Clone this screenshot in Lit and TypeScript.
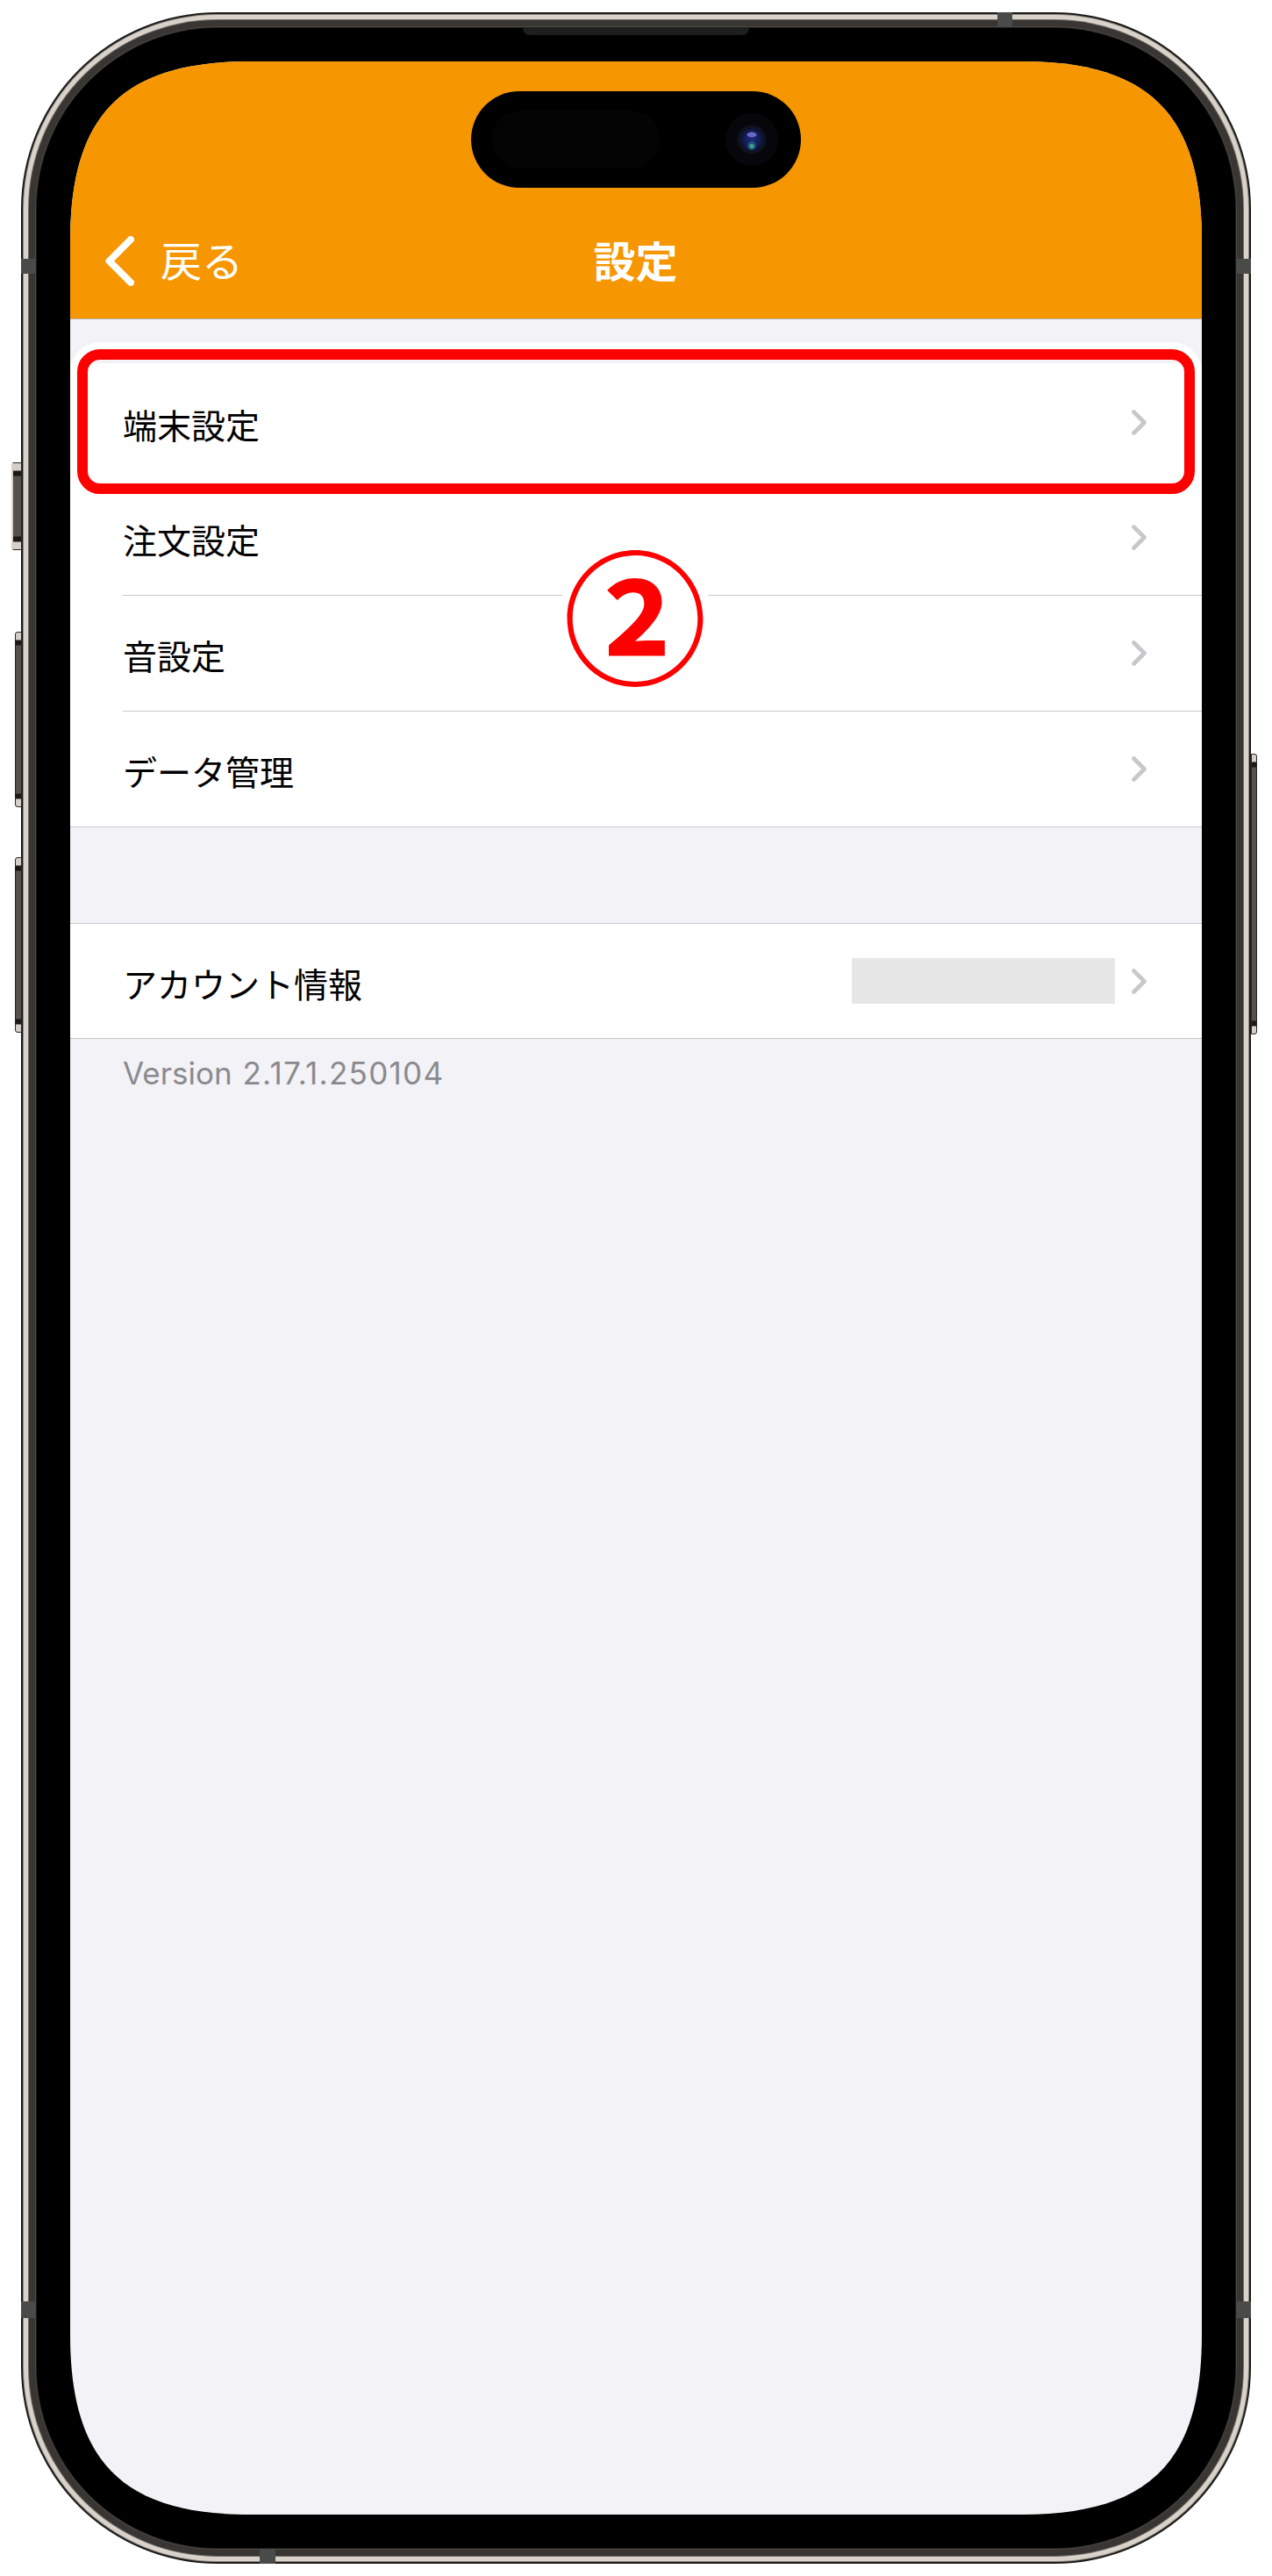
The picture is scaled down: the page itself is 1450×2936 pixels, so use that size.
import { LitElement, html, css } from "lit";
import { customElement } from "lit/decorators.js";

const chevron = html`<svg class="chev" width="17" height="29" viewBox="0 0 17 29" aria-hidden="true">
  <path d="M2.5 2.5 L14.5 14.5 L2.5 26.5" fill="none" stroke="#c7c7cc" stroke-width="4.6" stroke-linecap="round" stroke-linejoin="round"/>
</svg>`;

const camera = html`<svg class="cam" width="60" height="60" viewBox="-30 -30 60 60" aria-hidden="true">
  <defs>
    <radialGradient id="lens" cx="50%" cy="50%" r="50%">
      <stop offset="0%" stop-color="#1c2a78"/>
      <stop offset="70%" stop-color="#141c55"/>
      <stop offset="100%" stop-color="#0e1230"/>
    </radialGradient>
  </defs>
  <circle r="30" fill="#07060b"/>
  <circle r="16.5" fill="#0f1320"/>
  <circle r="13" fill="url(#lens)"/>
  <ellipse cx="0" cy="-5.5" rx="5.5" ry="3" fill="#6a68c4"/>
  <circle cx="0" cy="7" r="5" fill="#1f4f78"/>
  <circle cx="0" cy="7.5" r="2.6" fill="#3fa08a"/>
</svg>`;

@customElement("app-root")
export class AppRoot extends LitElement {
  static styles = css`
    :host {
      display: block;
      width: 1450px;
      height: 2936px;
      background: #fff;
      overflow: hidden;
      font-family: "Noto Sans CJK JP", "Liberation Sans", sans-serif;
    }
    .page {
      padding: 32px 0 0 42px;
    }
    .device {
      position: relative;
      width: 1366px;
      height: 2872px;
      box-sizing: border-box;
      padding: 38px;
      background: #000;
      border-radius: 206px;
      box-shadow:
        0 0 0 1px #1c1b1a,
        0 0 0 2px #4c4a47,
        0 0 0 9px #383533,
        0 0 0 10px #6f6b65,
        0 0 0 15px #d9d2ca,
        0 0 0 16px #8f8a84,
        0 0 0 18px #1b1a19;
    }
    .screen {
      position: relative;
      width: 1290px;
      height: 2796px;
      background: #f2f2f7;
      clip-path: path("M205 0 H1085 C1230 0 1290 60 1290 205 V2591 C1290 2736 1230 2796 1085 2796 H205 C60 2796 0 2736 0 2591 V205 C0 60 60 0 205 0 Z");
    }

    /* hardware details lying over the frame */
    .speaker {
      position: absolute;
      left: 554px;
      top: -1px;
      width: 258px;
      height: 9px;
      background: #1e1e1e;
      border-radius: 0 0 8px 8px;
    }
    .ant {
      position: absolute;
      background: #4a4a48;
    }
    .ant.l1 { left: -18px; top: 263px; width: 17px; height: 17px; }
    .ant.r1 { left: 1367px; top: 263px; width: 17px; height: 17px; }
    .ant.l2 { left: -18px; top: 2591px; width: 17px; height: 19px; }
    .ant.r2 { left: 1367px; top: 2591px; width: 17px; height: 19px; }
    .ant.t { left: 1095px; top: -18px; width: 17px; height: 17px; }
    .ant.b { left: 254px; top: 2873px; width: 18px; height: 17px; }

    .btn {
      position: absolute;
      box-sizing: border-box;
      border: 1px solid #2a2826;
      background: linear-gradient(
        #d6cfc7 0, #d6cfc7 8px, #1a1918 9px, #1a1918 14px, #55514c 15px,
        #55514c calc(100% - 15px), #1a1918 calc(100% - 14px), #1a1918 calc(100% - 9px),
        #d6cfc7 calc(100% - 8px), #d6cfc7 100%
      );
    }
    .btn.mute { left: -29px; top: 495px; width: 12px; height: 100px; border-radius: 3px 0 0 3px; border-left: 2px solid #d6cfc7; }
    .btn.up { left: -25px; top: 688px; width: 8px; height: 200px; border-radius: 3px 0 0 3px; }
    .btn.down { left: -25px; top: 945px; width: 8px; height: 200px; border-radius: 3px 0 0 3px; }
    .btn.power { left: 1384px; top: 827px; width: 7px; height: 320px; border-radius: 0 3px 3px 0; }

    /* nav */
    .nav {
      box-sizing: border-box;
      height: 294px;
      padding: 197px 0 0 39px;
      background: #f69600;
      border-bottom: 1px solid #b2b2b8;
      color: #fff;
      display: grid;
      grid-template-columns: 1fr auto 1fr;
      align-items: start;
    }
    .back {
      display: flex;
      align-items: center;
      height: 60px;
      gap: 30px;
      font-size: 47px;
      font-weight: 400;
      line-height: 56px;
    }
    .back span { padding-bottom: 4px; }
    .back svg { display: block; flex: none; }
    .title {
      height: 60px;
      font-size: 48px;
      line-height: 56px;
      font-weight: 700;
      transform: translateX(-20px);
    }

    .island {
      position: absolute;
      left: 457px;
      top: 34px;
      box-sizing: border-box;
      width: 376px;
      height: 110px;
      padding: 0 26px 0 23px;
      background: #000;
      border-radius: 55px;
      display: flex;
      align-items: center;
      justify-content: space-between;
    }
    .sensor {
      width: 193px;
      height: 66px;
      background: #040404;
      border-radius: 33px;
    }
    .cam { display: block; }

    /* lists */
    .list {
      background: #fff;
      border-bottom: 1px solid #c8c8cc;
    }
    .list.first {
      margin-top: 50px;
      border-top: 1px solid #fff;
    }
    .list.second {
      margin-top: 109px;
      border-top: 1px solid #c8c8cc;
    }
    .row {
      box-sizing: border-box;
      height: 132px;
      padding-left: 60px;
    }
    .row.end { height: 131px; }
    .row.acct { height: 130px; }
    .row-in {
      box-sizing: border-box;
      height: 100%;
      padding-right: 63px;
      display: flex;
      align-items: center;
      gap: 19px;
    }
    .row-in.sep { border-bottom: 1px solid #c8c8cc; }
    .label {
      flex: 1;
      padding-top: 3px;
      font-size: 39px;
      font-weight: 400;
      line-height: 50px;
      color: #000;
    }
    .chev { display: block; flex: none; }
    .redact {
      width: 300px;
      height: 52px;
      background: #e6e6e6;
    }
    .version {
      padding: 15px 0 0 60px;
      font-family: "Inter", "Liberation Sans", sans-serif;
      font-size: 35px;
      word-spacing: 2px;
      line-height: 48px;
      color: #8a8a8e;
    }
    .digits { letter-spacing: 1.3px; }

    /* red annotation */
    .mark {
      position: absolute;
      left: 8px;
      top: 328px;
      box-sizing: border-box;
      width: 1274px;
      height: 165px;
      border: 12px solid #ff0000;
      border-radius: 26px;
      box-shadow: 0 0 0 8px #fff;
    }
    .num {
      position: absolute;
      left: 559px;
      top: 548px;
      width: 170px;
      height: 170px;
      transform: translateY(-7px);
      border-radius: 50%;
      background: #fff;
      display: flex;
      align-items: center;
      justify-content: center;
      font-size: 164px;
      line-height: 170px;
      font-weight: 700;
      color: #ff0000;
    }
  `;

  render() {
    return html`
      <div class="page">
        <div class="device">
          <div class="btn mute"></div>
          <div class="btn up"></div>
          <div class="btn down"></div>
          <div class="btn power"></div>
          <div class="speaker"></div>
          <div class="ant l1"></div>
          <div class="ant r1"></div>
          <div class="ant l2"></div>
          <div class="ant r2"></div>
          <div class="ant t"></div>
          <div class="ant b"></div>
          <div class="screen">
            <div class="nav">
              <div class="back">
                <svg width="34" height="57" viewBox="0 0 34 57" aria-hidden="true">
                  <path d="M30 4 L5.5 28.5 L30 53" fill="none" stroke="#fff" stroke-width="8" stroke-linecap="round" stroke-linejoin="round"/>
                </svg>
                <span>戻る</span>
              </div>
              <div class="title">設定</div>
              <div></div>
            </div>
            <div class="list first">
              <div class="row"><div class="row-in"><span class="label">端末設定</span>${chevron}</div></div>
              <div class="row"><div class="row-in sep"><span class="label">注文設定</span>${chevron}</div></div>
              <div class="row"><div class="row-in sep"><span class="label">音設定</span>${chevron}</div></div>
              <div class="row end"><div class="row-in"><span class="label">データ管理</span>${chevron}</div></div>
            </div>
            <div class="list second">
              <div class="row acct">
                <div class="row-in">
                  <span class="label">アカウント情報</span>
                  <div class="redact"></div>
                  ${chevron}
                </div>
              </div>
            </div>
            <div class="version">Version <span class="digits">2.17.1.250104</span></div>
            <div class="island">
              <div class="sensor"></div>
              ${camera}
            </div>
            <div class="mark"></div>
            <div class="num">②</div>
          </div>
        </div>
      </div>
    `;
  }
}
